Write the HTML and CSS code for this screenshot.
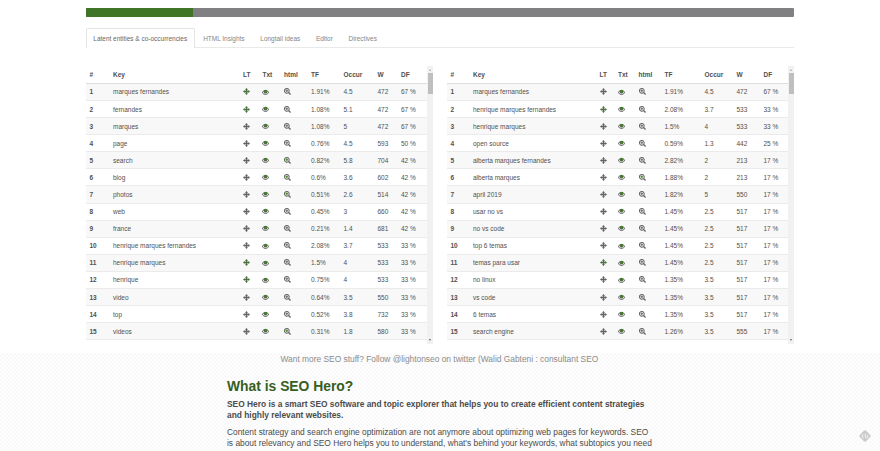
FILE: index.html
```
<!DOCTYPE html>
<html lang="en">
<head>
<meta charset="utf-8">
<title>SEO Hero</title>
<link rel="stylesheet" href="styles.css">
</head>
<body>
<svg width="0" height="0" class="defs">
  <symbol id="move" viewBox="0 0 16 16"><path d="M8 0l3.500 3.800H9.600v2.600h2.600V4.500L16 8l-3.800 3.500V9.600H9.600v2.600h1.900L8 16l-3.500-3.800h1.900V9.600H3.800v1.900L0 8l3.800-3.500v1.900h2.600V3.800H4.500z"/></symbol>
  <symbol id="eye" viewBox="0 0 16 14"><path fill-rule="evenodd" d="M0 7.500C2 3 5 1 8 1s6 2 8 6.500C14 11.500 11 13 8 13S2 11.500 0 7.500zm2 0C3.500 10 5.500 11.300 8 11.300s4.500-1.300 6-3.800c-.6-1.300-1.300-2.200-2.200-3 .9 3.500-.8 5.500-3.800 5.500S3.300 8 4.200 4.500C3.300 5.300 2.600 6.200 2 7.500z"/><path class="mark" d="M4.500 2.500h7v6.500L8 6.500z"/></symbol>
  <symbol id="zoom" viewBox="0 0 16 16"><path fill-rule="evenodd" d="M6.500 0a6.500 6.500 0 0 1 5.500 9.900l4 4-2.100 2.100-4-4A6.500 6.500 0 1 1 6.500 0zm0 2.100a4.400 4.400 0 1 0 0 8.800 4.400 4.400 0 0 0 0-8.800z"/><path class="mark" d="M5.400 3.300h2.200v2.100h2.100v2.200H7.600v2.100H5.400V7.600H3.300V5.400h2.100z"/></symbol>
</svg>
<div class="top">
  <div class="container">
    <div class="progress"><div class="progress-bar"></div></div>
    <nav class="tabs">
      <a class="tab active">Latent entities &amp; co-occurrencies</a>
      <a class="tab">HTML Insights</a>
      <a class="tab">Longtail ideas</a>
      <a class="tab">Editor</a>
      <a class="tab">Directives</a>
    </nav>
    <div class="panels">
      <div class="panel left"><div class="table" id="entities"></div><div class="scroll"><i class="up"></i><i class="thumb"></i><i class="down"></i></div></div>
      <div class="panel right"><div class="table" id="cooccurrences"></div><div class="scroll"><i class="up"></i><i class="thumb"></i><i class="down"></i></div></div>
    </div>
  </div>
</div>
<div class="bottom">
  <p class="follow">Want more SEO stuff? Follow @lightonseo on twitter (Walid Gabteni : consultant SEO</p>
  <article>
    <h2>What is SEO Hero?</h2>
    <p class="lead">SEO Hero is a smart SEO software and topic explorer that helps you to create efficient content strategies<br>and highly relevant websites.</p>
    <p class="copy">Content strategy and search engine optimization are not anymore about optimizing web pages for keywords. SEO<br>is about relevancy and SEO Hero helps you to understand, what's behind your keywords, what subtopics you need</p>
  </article>
  <svg class="badge" viewBox="0 0 12 12"><path d="M6 .3Q6.700.3 7.300.9L11.200 5q1 1 0 2L7.300 11.100Q6 12.200 4.700 11.100L.8 7q-1-1 0-2L4.700.9Q5.300.3 6 .3z" fill="#c9c9c9"/><path d="M4.300 4L3 6l1.500 2.500M6.300 3.500v4q1.500 1.500 2.500 0V5" fill="none" stroke="#fff" stroke-width=".8"/></svg>
</div>
<script src="table.js"></script>
</body>
</html>
```
FILE: styles.css
```
* { box-sizing: border-box; }
body { margin: 0; height: 451px; overflow: hidden; background: #fff; font-family: "Liberation Sans", Arial, sans-serif; color: #4c4c4c; }
.defs { display: block; height: 0; }
.top { height: 353px; background: #fff; }
.container { width: 708px; margin-left: 86px; padding-top: 7.500px; }
.progress { height: 9px; background: #808082; border-radius: 1px; }
.progress-bar { width: 107px; height: 9px; background: #407427; border-radius: 1px 0 0 1px; }
.tabs { display: flex; height: 20px; margin-top: 11px; border-bottom: 1px solid #e9e9e9; }
.tab { height: 20px; padding: 0 6.850px; line-height: 19px; font-size: 6.470px; color: #858585; white-space: nowrap; border: 1px solid transparent; border-bottom: 0; }
.tab.active { width: 109px; padding: 0 0 0 6.300px; margin-right: .3px; color: #666; background: #fff; border-color: #e4e4e4; border-radius: 2px 2px 0 0; }
.panels { display: flex; justify-content: space-between; margin-top: 18.500px; }
.panel { display: flex; width: 347px; height: 278px; overflow: hidden; }
.table { width: 341px; font-size: 6.500px; color: #505050; }
.row { display: grid; height: 17.100px; align-items: center; padding-left: 3.500px; border-bottom: 1px solid #ebebeb; white-space: nowrap; }
.row:nth-child(even) { background: #f8f8f8; }
.left .row { grid-template-columns: 23.500px 130px 19.500px 21.500px 27px 32.500px 34px 23.500px 1fr; }
.right .row { grid-template-columns: 22.500px 126.500px 18.500px 20.500px 26px 40px 32px 27px 1fr; }
.row.head { height: 17.900px; font-weight: bold; border-bottom: 1px solid #ddd; }
.row span:first-child { font-weight: bold; }
.icon { display: block; width: 7px; height: 7px; fill: #636363; }
.icon.eye { height: 6.500px; margin-left: -.5px; }
.green { --mark: #3c8518; }
.mark { fill: var(--mark, #686868); }
.icon.move.green { fill: #4c7040; }
.scroll { width: 6px; height: 278px; background: #f1f1f1; display: flex; flex-direction: column; align-items: center; }
.up, .down { width: 0; height: 0; border: 1.500px solid transparent; }
.up { border-bottom: 2px solid #aaa; border-top: 0; margin: 3px 0 2px; }
.down { border-top: 2px solid #666; border-bottom: 0; margin: auto 0 3px; }
.thumb { width: 5px; height: 21px; background: #bfbfc0; }
.bottom { position: relative; height: 98px; padding-top: 1px; background: repeating-conic-gradient(#f9f9f9 0 25%, #fefefe 0 50%) 0 0 / 4px 4px; }
.follow { margin: 0; height: 11px; line-height: 11px; padding-left: 280.500px; font-size: 8.400px; color: #8b8b8b; white-space: nowrap; }
article { margin: 13px 0 0 227px; white-space: nowrap; }
h2 { margin: 0; font-size: 13.870px; line-height: 17px; color: #365e23; }
p { margin: 0; }
.lead { margin-top: 3.500px; font-size: 8.400px; line-height: 11.600px; font-weight: bold; }
.copy { margin-top: 5px; font-size: 8.400px; line-height: 11.600px; }
.badge { position: absolute; left: 859px; top: 77px; width: 12px; height: 12px; }
```
FILE: table.js
```
const icon = (name, on) => `<svg class="icon ${name}${on ? ' green' : ''}"><use href="#${name}"/></svg>`;
const build = (id, rows, lt, html) => {
  const head = ['#', 'Key', 'LT', 'Txt', 'html', 'TF', 'Occur', 'W', 'DF'];
  let out = '<div class="row head">' + head.map(t => `<span>${t}</span>`).join('') + '</div>';
  rows.forEach((line, i) => {
    const [key, ...nums] = line.split('|');
    out += `<div class="row"><span>${i + 1}</span><span>${key}</span>${icon('move', lt.includes(i + 1))}${icon('eye', true)}${icon('zoom', html.includes(i + 1))}` + nums.map(t => `<span>${t}</span>`).join('') + '</div>';
  });
  document.getElementById(id).innerHTML = out;
};
build('entities', [
  'marques fernandes|1.91%|4.5|472|67 %', 'fernandes|1.08%|5.1|472|67 %', 'marques|1.08%|5|472|67 %',
  'page|0.76%|4.5|593|50 %', 'search|0.82%|5.8|704|42 %', 'blog|0.6%|3.6|602|42 %', 'photos|0.51%|2.6|514|42 %',
  'web|0.45%|3|660|42 %', 'france|0.21%|1.4|681|42 %', 'henrique marques fernandes|2.08%|3.7|533|33 %',
  'henrique marques|1.5%|4|533|33 %', 'henrique|0.75%|4|533|33 %', 'video|0.64%|3.5|550|33 %',
  'top|0.52%|3.8|732|33 %', 'videos|0.31%|1.8|580|33 %'
], [1, 2, 11, 12], [5, 6, 7, 15]);
build('cooccurrences', [
  'marques fernandes|1.91%|4.5|472|67 %', 'henrique marques fernandes|2.08%|3.7|533|33 %', 'henrique marques|1.5%|4|533|33 %',
  'open source|0.59%|1.3|442|25 %', 'alberta marques fernandes|2.82%|2|213|17 %', 'alberta marques|1.88%|2|213|17 %',
  'april 2019|1.82%|5|550|17 %', 'usar no vs|1.45%|2.5|517|17 %', 'no vs code|1.45%|2.5|517|17 %',
  'top 6 temas|1.45%|2.5|517|17 %', 'temas para usar|1.45%|2.5|517|17 %', 'no linux|1.35%|3.5|517|17 %',
  'vs code|1.35%|3.5|517|17 %', '6 temas|1.35%|3.5|517|17 %', 'search engine|1.26%|3.5|555|17 %'
], [2, 11], [6]);
```
